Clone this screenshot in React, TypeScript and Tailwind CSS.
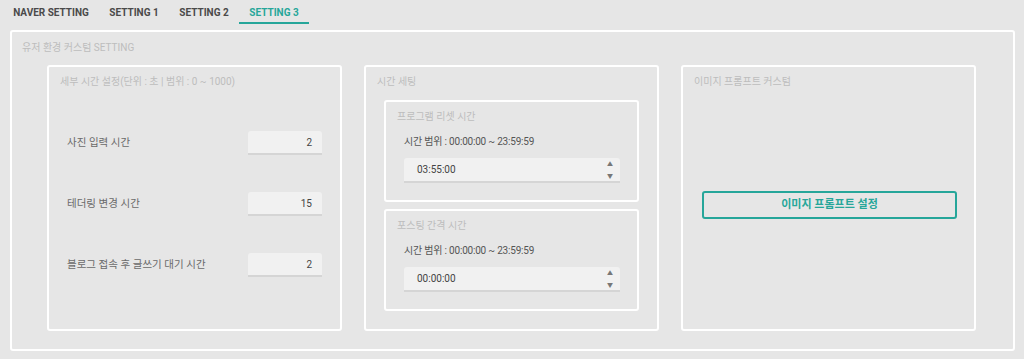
import React from "react";

const tabs = [
  { name: "NAVER SETTING", w: "w-[96px]" },
  { name: "SETTING 1", w: "w-[70px]" },
  { name: "SETTING 2", w: "w-[70px]" },
  { name: "SETTING 3", w: "w-[70px]" },
];

const delayRows = [
  { label: "사진 입력 시간", value: "2" },
  { label: "테더링 변경 시간", value: "15" },
  { label: "블로그 접속 후 글쓰기 대기 시간", value: "2" },
];

const TimeBox: React.FC<{ title: string; value: string }> = ({ title, value }) => (
  <div className="h-[102px] border-2 border-white rounded-[3px] pl-[11px] pr-[17px]">
    <div className="h-[16px] mt-[7px] leading-[16px] text-[10px] text-[#bdbdbd]">{title}</div>
    <div className="h-[16px] mt-[9px] pl-[7px] leading-[16px] text-[10px] tracking-[-0.2px] text-[#555]">
      시간 범위 : 00:00:00 ~ 23:59:59
    </div>
    <div className="mt-[8px] ml-[7px] h-[25px] bg-[#f1f1f1] rounded-t-[3px] border-b-2 border-[#d5d5d5] flex items-center pl-[13px] pr-[7px] text-[10px] text-[#444]">
      <span className="flex-1">{value}</span>
      <div className="flex flex-col items-center text-[6px] leading-[12px] text-[#777]">
        <span>▲</span>
        <span>▼</span>
      </div>
    </div>
  </div>
);

export default function App() {
  return (
    <div
      className="w-full h-[359px] bg-[#e6e6e6] overflow-hidden"
      style={{ fontFamily: 'Roboto, "Noto Sans CJK KR", sans-serif' }}
    >
      <div className="flex h-[24px] pl-[3px]">
        {tabs.map((t, i) => (
          <div
            key={t.name}
            className={
              t.w +
              " h-[24px] pt-[6px] text-center text-[10px] font-bold leading-[13px] border-b-2 " +
              (i === 3 ? "text-[#26a69a] border-[#26a69a]" : "text-[#4a4a4a] border-transparent")
            }
          >
            {t.name}
          </div>
        ))}
      </div>

      <div className="ml-[10px] mr-[9px] mt-[6px] h-[321px] border-2 border-white rounded-[3px]">
        <div className="h-[16px] mt-[8px] pl-[10px] leading-[16px] text-[10px] text-[#bdbdbd]">
          유저 환경 커스텀 SETTING
        </div>
        <div className="flex gap-[22px] pl-[35px] mt-[9px]">
          <div className="w-[295px] h-[266px] border-2 border-white rounded-[3px]">
            <div className="h-[16px] mt-[7px] pl-[11px] leading-[16px] text-[10px] text-[#bdbdbd]">
              세부 시간 설정(단위 : 초 | 범위 : 0 ~ 1000)
            </div>
            <div className="flex flex-col gap-[37px] mt-[41px] pl-[18px] pr-[18px]">
              {delayRows.map((r) => (
                <div key={r.label} className="flex items-center justify-between h-[24px]">
                  <span className="text-[10.5px] text-[#6a6a6a]">{r.label}</span>
                  <div className="w-[74px] h-[24px] bg-[#f1f1f1] rounded-t-[3px] border-b-2 border-[#d5d5d5] flex items-center justify-end pr-[10px] text-[10px] text-[#444]">
                    {r.value}
                  </div>
                </div>
              ))}
            </div>
          </div>

          <div className="w-[295px] h-[266px] border-2 border-white rounded-[3px] px-[18px]">
            <div className="h-[16px] mt-[7px] -ml-[7px] leading-[16px] text-[10px] text-[#bdbdbd]">
              시간 세팅
            </div>
            <div className="flex flex-col gap-[7px] mt-[10px]">
              <TimeBox title="프로그램 리셋 시간" value="03:55:00" />
              <TimeBox title="포스팅 간격 시간" value="00:00:00" />
            </div>
          </div>

          <div className="w-[295px] h-[266px] border-2 border-white rounded-[3px]">
            <div className="h-[16px] mt-[7px] pl-[11px] leading-[16px] text-[10px] text-[#bdbdbd]">
              이미지 프롬프트 커스텀
            </div>
            <div className="mt-[101px] ml-[19px] mr-[17px]">
              <button className="w-full h-[28px] border-2 border-[#26a69a] rounded-[3px] text-[11px] font-bold text-[#26a69a]">
                이미지 프롬프트 설정
              </button>
            </div>
          </div>
        </div>
      </div>
    </div>
  );
}
